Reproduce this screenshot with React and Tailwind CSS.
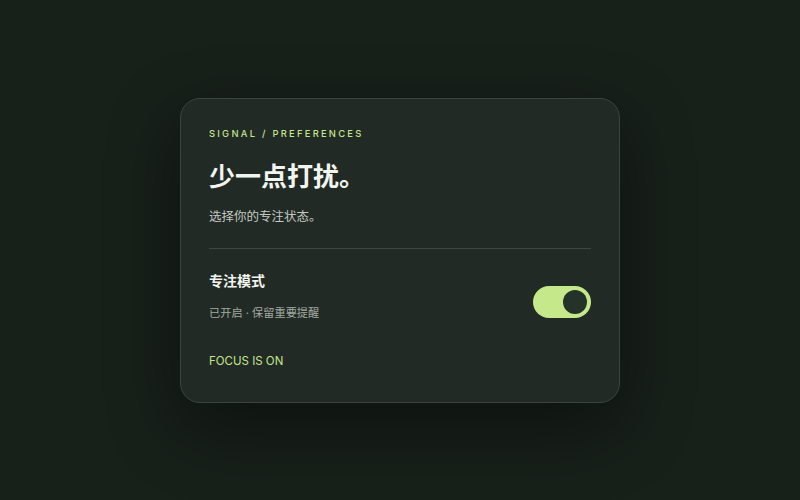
import React from "react";
import { useState } from "react";

const FocusCard = () => {
  const [on, setOn] = useState(true);

  return (
    <div className="w-[440px] rounded-[20px] border border-[#3a463d] bg-[#212a24] px-7 pt-[27px] pb-[32px] shadow-[0_24px_70px_rgba(0,0,0,0.45)]">
      <div className="text-[9.4px] leading-[15px] font-medium tracking-[0.24em] text-[#c4e58e]">
        SIGNAL / PREFERENCES
      </div>
      <h1 className="mt-[20px] text-[26px] leading-[32px] font-bold text-[#f2f4ef]">
        少一点打扰。
      </h1>
      <p className="mt-[14px] text-[12.5px] leading-[20px] text-[#c3c9c2]">
        选择你的专注状态。
      </p>
      <div className="mt-[21px] h-px bg-[#3d4740]" />

      <div className="mt-[22px] flex items-start justify-between">
        <div>
          <div className="text-[14px] leading-[20px] font-bold text-[#f2f4ef]">专注模式</div>
          <div className="mt-[13px] text-[11.2px] leading-[18px] text-[#a3aaa2]">
            已开启 · 保留重要提醒
          </div>
        </div>
        <button
          onClick={() => setOn(!on)}
          className="mt-[15px] flex h-[32px] w-[58px] items-center justify-end rounded-full bg-[#c5e98a] px-[4px]"
        >
          <span className="h-[24px] w-[24px] rounded-full bg-[#25322a]" />
        </button>
      </div>

      <div className="mt-[30px] text-[11.5px] leading-[18px] font-normal text-[#c4e58e]">
        FOCUS IS ON
      </div>
    </div>
  );
};

const App = () => {
  return (
    <div
      className="flex h-[500px] w-full items-center justify-center bg-[#18201a]"
      style={{ fontFamily: "Inter, 'Noto Sans CJK SC', sans-serif" }}
    >
      <FocusCard />
    </div>
  );
};

export default App;
